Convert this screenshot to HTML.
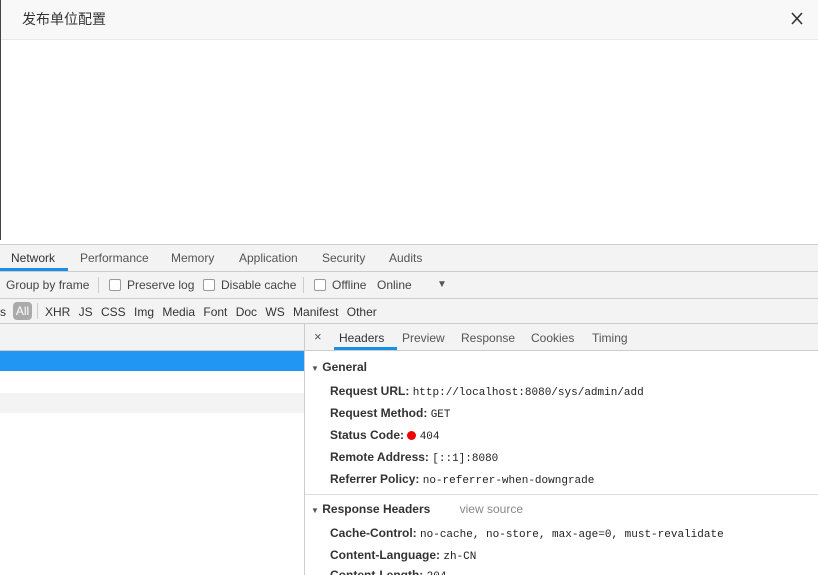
<!DOCTYPE html><html style="overflow:hidden;height:575px"><head><meta charset="utf-8"><style>
body{margin:0;width:818px;height:575px;overflow:hidden;font-family:"Liberation Sans","Noto Sans CJK SC",sans-serif;font-size:12px;color:#333;position:relative;background:#fff}
.a{position:absolute}
.mono{font-family:"Liberation Mono",monospace;font-size:11px;color:#222}
.cb{display:inline-block;width:10px;height:10px;border:1px solid #999;border-radius:2px;background:#fff;vertical-align:-2px;margin-right:6px}
.lbl{font-weight:bold;color:#333}
</style></head><body>
<div class="a" style="left:0;top:0;width:818px;height:39px;background:#f8f8f8;border-bottom:1px solid #e8e8e8"></div>
<div class="a" style="left:0;top:0;width:1px;height:240px;background:#444"></div>
<div class="a" style="left:22px;top:9px;font-size:14px;color:#333">发布单位配置</div>
<svg class="a" style="left:791px;top:12px" width="12" height="13"><path d="M1 1L11 12M11 1L1 12" stroke="#333" stroke-width="1.6"/></svg>
<div class="a" style="left:0;top:244px;width:818px;height:1px;background:#ccc"></div>
<div class="a" style="left:0;top:245px;width:818px;height:26px;background:#f3f3f3;border-bottom:1px solid #ccc;color:#555">
<span class="a" style="left:11px;top:6px;color:#333">Network</span>
<span class="a" style="left:80px;top:6px">Performance</span>
<span class="a" style="left:171px;top:6px">Memory</span>
<span class="a" style="left:239px;top:6px">Application</span>
<span class="a" style="left:322px;top:6px">Security</span>
<span class="a" style="left:389px;top:6px">Audits</span>
<div class="a" style="left:0;top:23px;width:68px;height:3px;background:#1a8fe8"></div></div>
<div class="a" style="left:0;top:272px;width:818px;height:26px;background:#f3f3f3;border-bottom:1px solid #ccc;color:#444">
<span class="a" style="left:6px;top:6px">Group by frame</span>
<div class="a" style="left:98px;top:5px;width:1px;height:16px;background:#ccc"></div>
<span class="a" style="left:109px;top:6px"><span class="cb"></span>Preserve log</span>
<span class="a" style="left:203px;top:6px"><span class="cb"></span>Disable cache</span>
<div class="a" style="left:303px;top:5px;width:1px;height:16px;background:#ccc"></div>
<span class="a" style="left:314px;top:6px"><span class="cb"></span>Offline</span>
<span class="a" style="left:377px;top:6px">Online</span>
<span class="a" style="left:437px;top:7px;font-size:10px;color:#555">▼</span></div>
<div class="a" style="left:0;top:299px;width:818px;height:24px;background:#f3f3f3;border-bottom:1px solid #ccc;color:#333">
<span class="a" style="left:0;top:6px">s</span>
<span class="a" style="left:13px;top:3px;width:19px;height:18px;background:#aaa;border-radius:4px;color:#fff;text-align:center;line-height:18px">All</span>
<div class="a" style="left:37px;top:4px;width:1px;height:16px;background:#ccc"></div>
<span class="a" style="left:45px;top:6px;word-spacing:5px">XHR JS CSS Img Media Font Doc WS Manifest Other</span></div>
<div class="a" style="left:0;top:324px;width:305px;height:26px;background:#f3f3f3;border-bottom:1px solid #ccc"></div>
<div class="a" style="left:0;top:351px;width:305px;height:20px;background:#2196f3"></div>
<div class="a" style="left:0;top:393px;width:305px;height:20px;background:#f3f3f3"></div>
<div class="a" style="left:304px;top:324px;width:1px;height:251px;background:#ccc"></div>
<div class="a" style="left:305px;top:324px;width:513px;height:26px;background:#f3f3f3;border-bottom:1px solid #ccc;color:#555">
<span class="a" style="left:9px;top:5px;font-size:13px">×</span>
<span class="a" style="left:34px;top:7px;color:#333">Headers</span>
<div class="a" style="left:29px;top:23px;width:63px;height:3px;background:#1a8fe8"></div>
<span class="a" style="left:97px;top:7px">Preview</span>
<span class="a" style="left:156px;top:7px">Response</span>
<span class="a" style="left:226px;top:7px">Cookies</span>
<span class="a" style="left:287px;top:7px">Timing</span></div>
<div class="a lbl" style="left:311px;top:360px"><span style="font-size:8px;color:#555">▼</span> General</div>
<div class="a" style="left:330px;top:384px"><span class="lbl">Request URL:</span> <span class="mono">http://localhost:8080/sys/admin/add</span></div>
<div class="a" style="left:330px;top:406px"><span class="lbl">Request Method:</span> <span class="mono">GET</span></div>
<div class="a" style="left:330px;top:428px"><span class="lbl">Status Code:</span> <span style="display:inline-block;width:9px;height:9px;border-radius:50%;background:#e00;vertical-align:-1px"></span> <span class="mono">404</span></div>
<div class="a" style="left:330px;top:450px"><span class="lbl">Remote Address:</span> <span class="mono">[::1]:8080</span></div>
<div class="a" style="left:330px;top:472px"><span class="lbl">Referrer Policy:</span> <span class="mono">no-referrer-when-downgrade</span></div>
<div class="a" style="left:305px;top:494px;width:513px;height:1px;background:#ddd"></div>
<div class="a lbl" style="left:311px;top:502px"><span style="font-size:8px;color:#555">▼</span> Response Headers <span style="font-weight:normal;color:#888;margin-left:26px">view source</span></div>
<div class="a" style="left:330px;top:526px"><span class="lbl">Cache-Control:</span> <span class="mono">no-cache, no-store, max-age=0, must-revalidate</span></div>
<div class="a" style="left:330px;top:548px"><span class="lbl">Content-Language:</span> <span class="mono">zh-CN</span></div>
<div class="a" style="left:330px;top:568px;height:7px;overflow:hidden"><span class="lbl">Content-Length:</span> <span class="mono">204</span></div>
</body></html>
